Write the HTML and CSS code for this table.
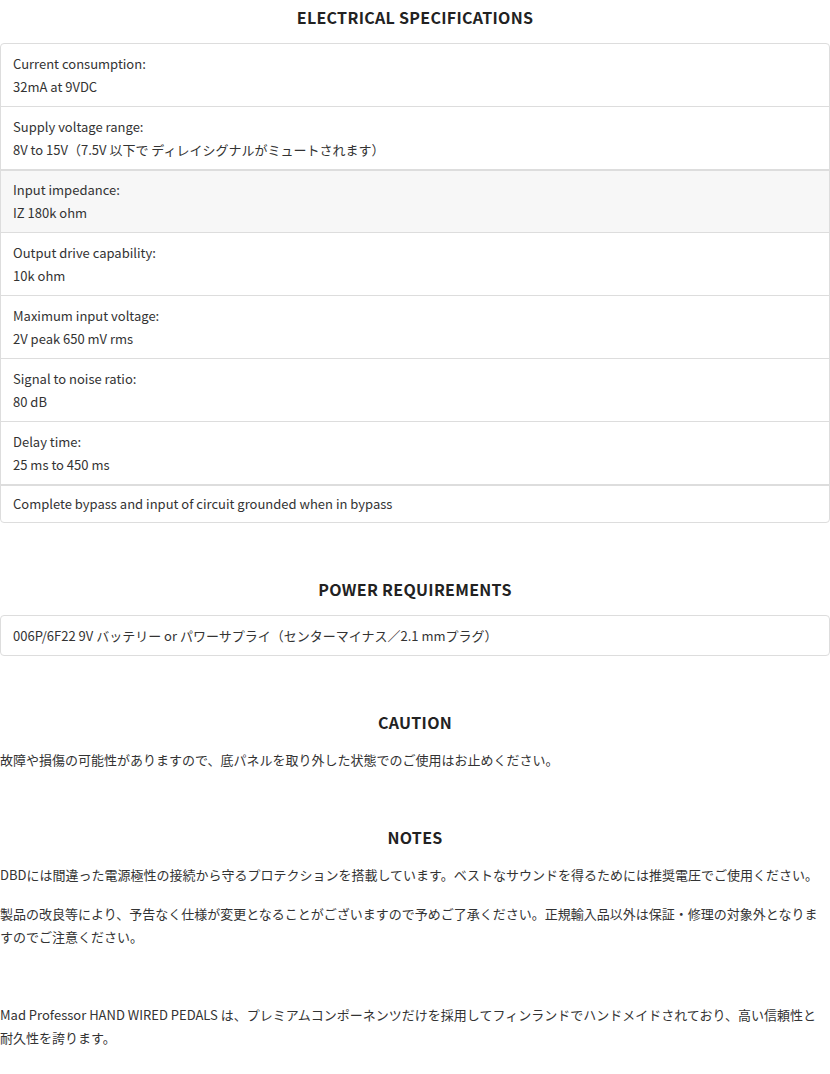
FILE: index.html
```html
<!DOCTYPE html>
<html lang="ja">
<head>
  <meta charset="UTF-8" />
  <title>Specifications</title>
  <link rel="stylesheet" href="styles.css">
</head>
<body>

  <!-- 電気的仕様 -->
  <section class="section first">
    <h2>ELECTRICAL SPECIFICATIONS</h2>
    <div class="spec-table">
      <div class="row">
        <div>Current consumption:</div>
        <div>32mA at 9VDC</div>
      </div>
      <div class="row">
        <div>Supply voltage range:</div>
        <div>8V to 15V（7.5V 以下で ディレイシグナルがミュートされます）</div>
      </div>
      <div class="row shaded thick">
        <div>Input impedance:</div>
        <div>IZ 180k ohm</div>
      </div>
      <div class="row">
        <div>Output drive capability:</div>
        <div>10k ohm</div>
      </div>
      <div class="row">
        <div>Maximum input voltage:</div>
        <div>2V peak 650 mV rms</div>
      </div>
      <div class="row">
        <div>Signal to noise ratio:</div>
        <div>80 dB</div>
      </div>
      <div class="row">
        <div>Delay time:</div>
        <div>25 ms to 450 ms</div>
      </div>
      <div class="row single thick">
        <div>Complete bypass and input of circuit grounded when in bypass</div>
      </div>
    </div>
  </section>

  <!-- 電源 -->
  <section class="section">
    <h2>POWER REQUIREMENTS</h2>
    <div class="spec-table">
      <div class="row single power">
        <div>006P/6F22 9V バッテリー or パワーサプライ（センターマイナス／2.1 mmプラグ）</div>
      </div>
    </div>
  </section>

  <!-- 注意 -->
  <section class="section">
    <h2>CAUTION</h2>
    <p>故障や損傷の可能性がありますので、底パネルを取り外した状態でのご使用はお止めください。</p>
  </section>

  <!-- 備考 -->
  <section class="section">
    <h2>NOTES</h2>
    <p>DBDには間違った電源極性の接続から守るプロテクションを搭載しています。ベストなサウンドを得るためには推奨電圧でご使用ください。</p>
    <p>製品の改良等により、予告なく仕様が変更となることがございますので予めご了承ください。正規輸入品以外は保証・修理の対象外となりますのでご注意ください。</p>
    <p>&nbsp;</p>
    <p>Mad Professor HAND WIRED PEDALS は、プレミアムコンポーネンツだけを採用してフィンランドでハンドメイドされており、高い信頼性と<br>耐久性を誇ります。</p>
  </section>

</body>
</html>
```

FILE: styles.css
```css
* {
  box-sizing: border-box;
}

body {
  margin: 0;
  padding: 0;
  font-family: "Noto Sans CJK JP", "Open Sans", sans-serif;
  font-size: 13px;
  line-height: 23px;
  color: #333;
  background-color: #fff;
}

.section {
  padding-top: 54px;
}

.section.first {
  padding-top: 5px;
}

h2 {
  margin: 0 0 14px;
  font-size: 16px;
  line-height: 24px;
  font-weight: bold;
  text-align: center;
  color: #222;
  letter-spacing: 0.3px;
}

.spec-table {
  border: 1px solid #ddd;
  border-radius: 4px;
  overflow: hidden;
}

.row {
  padding: 8px 12px;
  border-top: 1px solid #ddd;
}

.row:first-child {
  border-top: none;
}

.row.thick {
  border-top: 2px solid #ddd;
  padding-top: 7px;
}

.row.shaded {
  background-color: #f7f7f7;
}

.row.single {
  padding: 7px 12px;
}

.row.single.thick {
  padding-top: 6px;
}

.row.power {
  padding: 8px 12px;
}

p {
  margin: 0 0 16px;
}

.section p:last-child {
  margin-bottom: 0;
}
```
